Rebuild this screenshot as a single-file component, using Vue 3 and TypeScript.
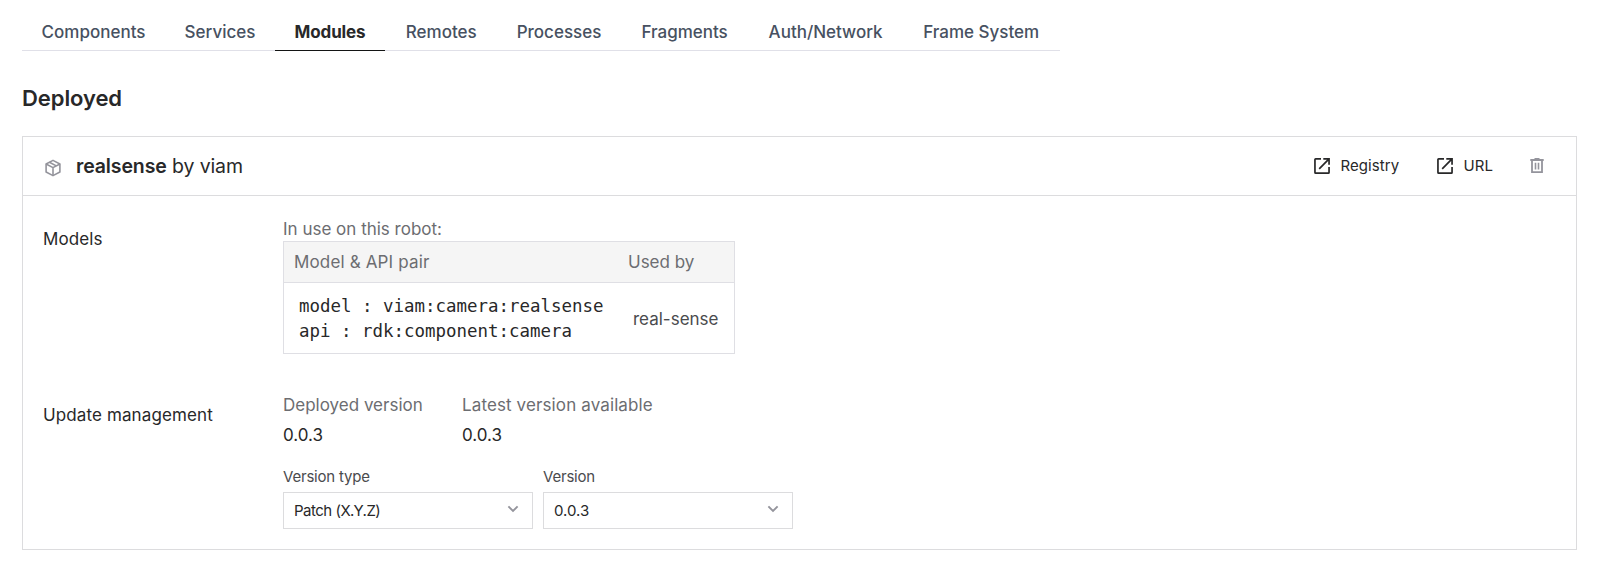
<script setup lang="ts">
interface Tab {
  label: string
  active?: boolean
}

interface Field {
  label: string
  value: string
  kind: string
}

const tabs: Tab[] = [
  { label: 'Components' },
  { label: 'Services' },
  { label: 'Modules', active: true },
  { label: 'Remotes' },
  { label: 'Processes' },
  { label: 'Fragments' },
  { label: 'Auth/Network' },
  { label: 'Frame System' },
]

const links: string[] = ['Registry', 'URL']

const selects: Field[] = [
  { label: 'Version type', value: 'Patch (X.Y.Z)', kind: 'type' },
  { label: 'Version', value: '0.0.3', kind: 'number' },
]
</script>

<template>
  <main class="page">
    <nav class="tabs">
      <a v-for="tab in tabs" :key="tab.label" class="tab" :class="{ active: tab.active }">{{ tab.label }}</a>
    </nav>

    <h1 class="title">Deployed</h1>

    <section class="card">
      <header class="card-head">
        <svg class="box-icon" viewBox="0 0 18 18" fill="none" stroke="currentColor" stroke-width="1.6" stroke-linejoin="round">
          <path d="M9 1.4 15.9 5v8L9 16.6 2.1 13V5Z" />
          <path d="M2.1 5 9 8.6 15.9 5M9 8.6v8M5.4 3.3l6.9 3.6" />
        </svg>
        <h2 class="module"><strong>realsense</strong> by viam</h2>
        <div class="actions">
          <a v-for="link in links" :key="link" class="link">
            <svg class="link-icon" viewBox="0 0 16 16" fill="none" stroke="currentColor" stroke-width="1.7">
              <path d="M7 .95H1.6a.65.65 0 0 0-.65.65v12.8c0 .36.29.65.65.65h12.8c.36 0 .65-.29.65-.65V9M9.3.95h5.75V6.7M14.8 1.2 5.2 10.8" />
            </svg>
            <span>{{ link }}</span>
          </a>
          <svg class="trash" viewBox="0 0 14 16" fill="none" stroke="currentColor">
            <path d="M.3 2h13.4M4.5 1h5" stroke-width="1.8" />
            <path d="M2 2v12.2h10V2" stroke-width="1.8" />
            <path d="M5.5 4.7v6.8M8.5 4.7v6.8" stroke-width="1.6" />
          </svg>
        </div>
      </header>

      <div class="body">
        <div class="row">
          <h3 class="row-label">Models</h3>
          <div>
            <p class="muted">In use on this robot:</p>
            <div class="table">
              <div class="thead">
                <span class="pair">Model &amp; API pair</span>
                <span>Used by</span>
              </div>
              <div class="trow">
                <div class="mono">
                  <div>model : viam:camera:realsense</div>
                  <div>api : rdk:component:camera</div>
                </div>
                <span class="user">real-sense</span>
              </div>
            </div>
          </div>
        </div>

        <div class="row update">
          <h3 class="row-label">Update management</h3>
          <div>
            <dl class="versions">
              <div>
                <dt class="muted">Deployed version</dt>
                <dd>0.0.3</dd>
              </div>
              <div>
                <dt class="muted latest">Latest version available</dt>
                <dd>0.0.3</dd>
              </div>
            </dl>
            <div class="selects">
              <div v-for="field in selects" :key="field.label" class="field">
                <span class="field-label">{{ field.label }}</span>
                <div class="select">
                  <span :class="field.kind">{{ field.value }}</span>
                  <svg class="chevron" viewBox="0 0 12 8" fill="none" stroke="currentColor" stroke-width="1.9">
                    <path d="m1.4 1.4 4.6 4.6 4.6-4.6" />
                  </svg>
                </div>
              </div>
            </div>
          </div>
        </div>
      </div>
    </section>
  </main>
</template>

<style>
body {
  background: #fff;
}
</style>

<style scoped>
.page {
  box-sizing: border-box;
  width: 1602px;
  height: 584px;
  padding: 0 25px 0 22px;
  color: #282829;
  font: 400 17px/24px Inter, "Liberation Sans", sans-serif;
}

h1, h2, h3, p, dl, dd {
  margin: 0;
  font-size: inherit;
  font-weight: 400;
}

.tabs {
  display: grid;
  grid-template-columns: 143px 110px 110px 112.5px 123px 128.2px 153.8px 157.5px;
  width: 1038px;
}

.tab {
  box-sizing: border-box;
  height: 51px;
  padding-top: 20px;
  border-bottom: 1px solid #e0e0e8;
  color: #475161;
  font-weight: 500;
  text-align: center;
  white-space: nowrap;
}

.tab.active {
  border-color: #131414;
  color: #282829;
  font-weight: 700;
  letter-spacing: -0.15px;
}

.title {
  margin: 33px 0 24px;
  font-size: 22px;
  font-weight: 600;
  line-height: 28px;
  letter-spacing: -0.08px;
}

.card {
  border: 1px solid #dcdcde;
}

.card-head {
  display: flex;
  align-items: center;
  height: 58px;
  padding: 0 32px 0 21px;
  border-bottom: 1px solid #dcdcde;
}

.box-icon {
  width: 18px;
  height: 18px;
  margin-top: 3px;
  color: #94949c;
}

.module {
  margin-left: 14px;
  font-size: 19.5px;
  letter-spacing: -0.12px;
}

.module strong {
  font-weight: 600;
}

.actions {
  display: flex;
  align-items: center;
  margin-left: auto;
}

.link {
  display: flex;
  align-items: center;
  gap: 10px;
  margin-right: 38px;
  font-size: 15px;
  letter-spacing: 0.1px;
}

.link:nth-child(2) {
  margin-right: 37px;
}

.link-icon {
  width: 16px;
  height: 16px;
}

.trash {
  width: 14px;
  height: 16px;
  color: #94949c;
}

.body {
  padding: 21px 20px 20px;
}

.row {
  display: grid;
  grid-template-columns: 240px 1fr;
}

.row-label {
  padding-top: 10px;
  letter-spacing: 0.12px;
}

.muted {
  color: #6c6d71;
}

.table {
  width: 450px;
  border: 1px solid #dfdfe4;
}

.thead, .trow {
  display: grid;
  grid-template-columns: 334px 1fr;
  align-items: center;
}

.thead {
  height: 40px;
  border-bottom: 1px solid #dfdfe4;
  background: #f5f5f5;
  color: #6c6d71;
}

.thead span {
  padding-left: 10px;
}

.thead .pair {
  letter-spacing: 0.15px;
}

.trow {
  box-sizing: border-box;
  height: 70px;
  padding-top: 2px;
}

.mono {
  padding-left: 15px;
  font: 17.44px/25px "DejaVu Sans Mono", "Liberation Mono", monospace;
}

.user {
  padding-left: 15px;
  color: #4a4b4e;
}

.update {
  margin-top: 39px;
}

.versions {
  display: grid;
  grid-template-columns: 179px 1fr;
}

.versions dd {
  margin-top: 6px;
}

.latest {
  letter-spacing: 0.12px;
}

.selects {
  display: flex;
  gap: 10px;
  margin-top: 20px;
  font-size: 15px;
  line-height: 20px;
}

.field {
  width: 250px;
}

.field-label {
  display: block;
  margin-bottom: 5px;
  color: #4a4b4e;
  letter-spacing: -0.2px;
}

.select {
  box-sizing: border-box;
  display: flex;
  align-items: center;
  justify-content: space-between;
  height: 37px;
  padding: 0 13px 0 10px;
  border: 1px solid #dcdcde;
}

.type {
  letter-spacing: -0.5px;
}

.chevron {
  width: 12px;
  height: 8px;
  margin-bottom: 4px;
  color: #94949c;
}
</style>
